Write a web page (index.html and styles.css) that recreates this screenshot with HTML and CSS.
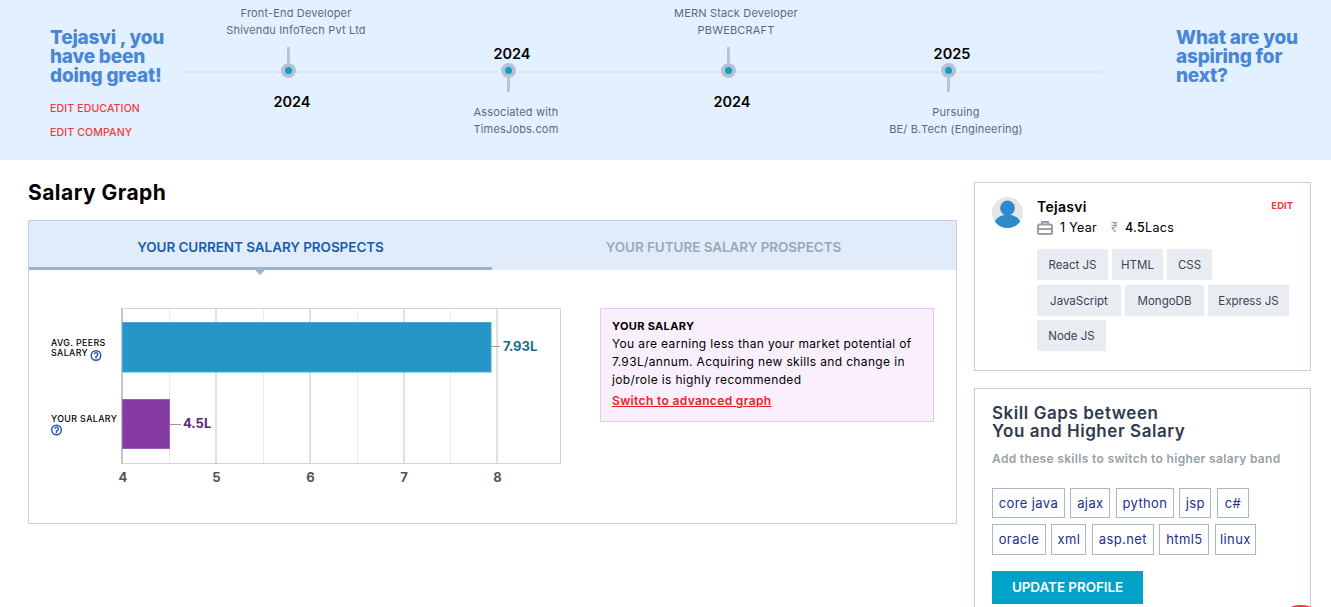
FILE: index.html

```html
<!DOCTYPE html>
<html lang="en">
<head>
    <meta charset="UTF-8">
    <meta name="viewport" content="width=device-width, initial-scale=1.0">
    <title>Salary Graph</title>
    <link rel="stylesheet" href="styles.css">
</head>
<body>
    <!-- Career banner -->
    <section class="banner">
        <div class="banner-left">
            <h2 class="banner-title">Tejasvi , you have been doing great!</h2>
            <a class="edit-link" href="#">EDIT EDUCATION</a>
            <a class="edit-link" href="#">EDIT COMPANY</a>
        </div>

        <div class="timeline">
            <div class="tl-item">
                <div class="tl-top">
                    <p class="tl-text">Front-End Developer<br>Shivendu InfoTech Pvt Ltd</p>
                    <span class="tl-stem"></span>
                </div>
                <span class="tl-dot"></span>
                <div class="tl-bottom">
                    <span class="tl-year tl-year-low">2024</span>
                </div>
            </div>
            <div class="tl-item">
                <div class="tl-top">
                    <span class="tl-year tl-year-high">2024</span>
                </div>
                <span class="tl-dot"></span>
                <div class="tl-bottom">
                    <span class="tl-stem"></span>
                    <p class="tl-text tl-text-low">Associated with<br>TimesJobs.com</p>
                </div>
            </div>
            <div class="tl-item">
                <div class="tl-top">
                    <p class="tl-text">MERN Stack Developer<br>PBWEBCRAFT</p>
                    <span class="tl-stem"></span>
                </div>
                <span class="tl-dot"></span>
                <div class="tl-bottom">
                    <span class="tl-year tl-year-low">2024</span>
                </div>
            </div>
            <div class="tl-item">
                <div class="tl-top">
                    <span class="tl-year tl-year-high">2025</span>
                </div>
                <span class="tl-dot"></span>
                <div class="tl-bottom">
                    <span class="tl-stem"></span>
                    <p class="tl-text tl-text-low">Pursuing<br>BE/ B.Tech (Engineering)</p>
                </div>
            </div>
        </div>

        <div class="banner-right">
            <h2 class="banner-title">What are you aspiring for next?</h2>
        </div>
    </section>

    <main class="content">
        <div class="graph-col">
            <h1 class="graph-title">Salary Graph</h1>

            <div class="graph-panel">
                <div class="tabs">
                    <div class="tab tab-active">YOUR CURRENT SALARY PROSPECTS</div>
                    <div class="tab">YOUR FUTURE SALARY PROSPECTS</div>
                </div>

                <div class="graph-body">
                    <!-- viewBox uses page coordinates, easier to read off the gridlines -->
                    <svg class="chart" width="540" height="190" viewBox="40 300 540 190">
                        <g class="grid-minor">
                            <line x1="169.5" y1="308" x2="169.5" y2="464"></line>
                            <line x1="263.5" y1="308" x2="263.5" y2="464"></line>
                            <line x1="357.5" y1="308" x2="357.5" y2="464"></line>
                            <line x1="450.5" y1="308" x2="450.5" y2="464"></line>
                        </g>
                        <g class="grid-major">
                            <line x1="216" y1="308" x2="216" y2="464"></line>
                            <line x1="310" y1="308" x2="310" y2="464"></line>
                            <line x1="404" y1="308" x2="404" y2="464"></line>
                            <line x1="497" y1="308" x2="497" y2="464"></line>
                        </g>
                        <rect class="plot-frame" x="122.5" y="308.5" width="438" height="155"></rect>
                        <line class="axis-y" x1="122" y1="308" x2="122" y2="464"></line>

                        <rect class="bar-peers" x="122.5" y="322.5" width="368.5" height="49.5"></rect>
                        <rect class="bar-you" x="122.5" y="399.5" width="47" height="49"></rect>
                        <line class="leader" x1="491" y1="346.5" x2="500" y2="346.5"></line>
                        <line class="leader" x1="170" y1="424.5" x2="181" y2="424.5"></line>
                        <text class="val val-peers" x="503" y="351">7.93L</text>
                        <text class="val val-you" x="183" y="428">4.5L</text>

                        <text class="cat" x="51" y="346">AVG. PEERS</text>
                        <text class="cat" x="51" y="356">SALARY</text>
                        <text class="cat" x="51" y="422">YOUR SALARY</text>

                        <g class="help" transform="translate(96 355.5)">
                            <circle r="4.8"></circle>
                            <path d="M-1.8 -1.2 A1.8 1.8 0 1 1 0.6 0.6 L0 1.2 V3"></path>
                        </g>
                        <g class="help" transform="translate(56.5 430)">
                            <circle r="4.8"></circle>
                            <path d="M-1.8 -1.2 A1.8 1.8 0 1 1 0.6 0.6 L0 1.2 V3"></path>
                        </g>

                        <text class="tick" x="123" y="482">4</text>
                        <text class="tick" x="216.5" y="482">5</text>
                        <text class="tick" x="310.5" y="482">6</text>
                        <text class="tick" x="404" y="482">7</text>
                        <text class="tick" x="497.5" y="482">8</text>
                    </svg>

                    <div class="salary-note">
                        <strong class="note-title">YOUR SALARY</strong>
                        <p class="note-text">You are earning less than your market potential of 7.93L/annum. Acquiring new skills and change in job/role is highly recommended</p>
                        <a class="note-link" href="#">Switch to advanced graph</a>
                    </div>
                </div>
            </div>
        </div>

        <aside class="side-col">
            <div class="card profile-card">
                <svg class="avatar" width="31" height="31" viewBox="0 0 31 31">
                    <defs>
                        <clipPath id="avatarClip"><circle cx="15.5" cy="15.5" r="15.5"></circle></clipPath>
                    </defs>
                    <circle cx="15.5" cy="15.5" r="15.5" fill="#e6e6e6"></circle>
                    <g clip-path="url(#avatarClip)" fill="#2f8acb">
                        <circle cx="15.5" cy="11" r="7.4"></circle>
                        <ellipse cx="15.5" cy="27" rx="13" ry="9.5"></ellipse>
                    </g>
                </svg>
                <div class="profile-info">
                    <div class="profile-head">
                        <span class="profile-name">Tejasvi</span>
                        <a class="profile-edit" href="#">EDIT</a>
                    </div>
                    <div class="profile-meta">
                        <svg class="case-icon" width="16" height="14" viewBox="0 0 16 14">
                            <rect x="1" y="3.5" width="14" height="9.5" rx="1.5"></rect>
                            <path d="M5 3.5V1H11V3.5M1 8H15"></path>
                        </svg>
                        <span class="meta-years">1 Year</span>
                        <span class="meta-rupee">₹</span>
                        <span class="meta-salary"><b>4.5</b>Lacs</span>
                    </div>
                    <div class="skills">
                        <span class="skill w-react">React JS</span>
                        <span class="skill w-html">HTML</span>
                        <span class="skill w-css">CSS</span>
                        <span class="skill w-js">JavaScript</span>
                        <span class="skill w-mongo">MongoDB</span>
                        <span class="skill w-express">Express JS</span>
                        <span class="skill w-node">Node JS</span>
                    </div>
                </div>
            </div>

            <div class="card gaps-card">
                <h3 class="gaps-title">Skill Gaps between<br>You and Higher Salary</h3>
                <p class="gaps-sub">Add these skills to switch to higher salary band</p>
                <div class="gap-tags">
                    <span class="gap-tag w-core">core java</span>
                    <span class="gap-tag w-ajax">ajax</span>
                    <span class="gap-tag w-python">python</span>
                    <span class="gap-tag w-jsp">jsp</span>
                    <span class="gap-tag w-c">c#</span>
                </div>
                <div class="gap-tags gap-tags-second">
                    <span class="gap-tag w-oracle">oracle</span>
                    <span class="gap-tag w-xml">xml</span>
                    <span class="gap-tag w-asp">asp.net</span>
                    <span class="gap-tag w-html5">html5</span>
                    <span class="gap-tag w-linux">linux</span>
                </div>
                <button class="update-btn" type="button">UPDATE PROFILE</button>
            </div>
        </aside>
    </main>

    <div class="chat-bubble"></div>
</body>
</html>
```

FILE: styles.css

```css
* {
    box-sizing: border-box;
}

html, body {
    height: 100%;
    overflow: hidden;
}

body {
    margin: 0;
    background-color: #fff;
    font-family: Inter, "Open Sans", sans-serif;
    color: #000;
}

h1, h2, h3, p {
    margin: 0;
}

a {
    text-decoration: none;
}

/* banner */
.banner {
    display: flex;
    height: 160px;
    background-color: #e3f0ff;
}

.banner-left {
    width: 186px;
    padding: 28px 0 0 50px;
}

.banner-right {
    width: 136px;
    margin-left: 76px;
    padding-top: 28px;
}

.banner-title {
    font-size: 19px;
    line-height: 19px;
    font-weight: 800;
    color: #4a86d6;
    letter-spacing: -0.2px;
}

.edit-link {
    display: block;
    margin-top: 12px;
    font-size: 10.5px;
    line-height: 12px;
    font-weight: 500;
    letter-spacing: 0.15px;
    color: #ee3a3a;
}

.banner-title + .edit-link {
    margin-top: 18px;
}

.timeline {
    display: flex;
    width: 914px;
    height: 160px;
    background-image: repeating-linear-gradient(to right, #d6e2f0 0, #d6e2f0 6px, transparent 6px, transparent 9px);
    background-size: 100% 2px;
    background-position: 0 71px;
    background-repeat: no-repeat;
}

.tl-item {
    display: flex;
    flex-direction: column;
    align-items: center;
    width: 220px;
}

.tl-top {
    display: flex;
    flex-direction: column;
    align-items: center;
    width: 100%;
    height: 63px;
}

.tl-bottom {
    display: flex;
    flex-direction: column;
    align-items: center;
    width: 100%;
}

.tl-text {
    height: 43px;
    padding-top: 5px;
    font-size: 11px;
    line-height: 17px;
    letter-spacing: 0.17px;
    color: #5c6b80;
    text-align: center;
    white-space: nowrap;
}

.tl-text-low {
    height: auto;
    padding-top: 12px;
}

.tl-stem {
    display: block;
    flex: none;
    width: 3px;
    height: 16px;
    margin-right: 16px;
    margin-top: 5px;
    background-color: #b7c5d9;
}

.tl-bottom .tl-stem {
    margin-top: -2px;
}

.tl-dot {
    flex: none;
    width: 15px;
    height: 15px;
    margin-right: 16px;
    border-radius: 50%;
    border: 4px solid #b3c2d8;
    background-color: #139fc0;
}

.tl-year {
    font-size: 14.5px;
    line-height: 18px;
    font-weight: 600;
    margin-right: 8px;
}

.tl-year-high {
    margin-top: 45px;
}

.tl-year-low {
    margin-top: 15px;
}

/* main area */
.content {
    display: flex;
    gap: 17px;
    padding: 22px 20px 0 28px;
}

.graph-col {
    width: 929px;
    flex: none;
}

.graph-title {
    height: 20px;
    font-size: 21px;
    line-height: 21px;
    font-weight: 700;
    letter-spacing: 0.45px;
    margin-bottom: 18px;
}

.graph-panel {
    border: 1px solid #c9ced8;
}

.tabs {
    display: flex;
    height: 49px;
    background-color: #e0ecfa;
}

.tab {
    width: 463px;
    padding-top: 17px;
    font-size: 13.5px;
    line-height: 18px;
    font-weight: 600;
    letter-spacing: -0.06px;
    text-align: center;
    color: #9aa8b8;
}

.tab-active {
    position: relative;
    color: #1a5cb0;
    border-bottom: 3px solid #9ab3d0;
}

.tab-active::after {
    content: "";
    position: absolute;
    left: 226px;
    top: 49px;
    border: 5px solid transparent;
    border-top-color: #9ab3d0;
    border-bottom-width: 0;
}

.graph-body {
    display: flex;
    align-items: flex-start;
    gap: 20px;
    padding: 30px 0 33px 11px;
}

.chart {
    display: block;
    flex: none;
}

.grid-minor line {
    stroke: #ececf0;
    stroke-width: 1;
}

.grid-major line {
    stroke: #d6d6db;
    stroke-width: 1.5;
}

.plot-frame {
    fill: none;
    stroke: #d2d2d8;
}

.axis-y {
    stroke: #c6c6c6;
    stroke-width: 2;
}

.bar-peers {
    fill: #2696c6;
    stroke: #45a9d2;
}

.bar-you {
    fill: #863ba3;
    stroke: #9a5ab5;
}

.leader {
    stroke: #9a9a9a;
}

.val {
    font-size: 13px;
    font-weight: 700;
}

.val-peers {
    fill: #1a6b8c;
}

.val-you {
    fill: #5a2a78;
}

.cat {
    font-size: 8.8px;
    font-weight: 500;
    letter-spacing: 0.4px;
    fill: #000;
}

.help circle {
    fill: #fff;
    stroke: #1c50b8;
    stroke-width: 1.4;
}

.help path {
    fill: none;
    stroke: #1c50b8;
    stroke-width: 1.4;
}

.tick {
    font-size: 13px;
    font-weight: 700;
    fill: #555;
    text-anchor: middle;
}

.salary-note {
    width: 334px;
    height: 114px;
    margin-top: 8px;
    padding: 10px 11px 0;
    background-color: #faf0fd;
    border: 1px solid #e4c7f3;
    font-size: 12px;
    line-height: 18px;
    letter-spacing: 0.35px;
}

.note-title {
    display: block;
    font-size: 11px;
    line-height: 14px;
    font-weight: 700;
}

.note-text {
    margin-top: 2px;
}

.note-link {
    display: block;
    margin-top: 3px;
    font-weight: 600;
    color: #ee1c25;
    text-decoration: underline;
}

/* right column */
.side-col {
    width: 337px;
    flex: none;
}

.card {
    background-color: #fff;
    border: 1px solid #c5d0de;
}

.profile-card {
    display: flex;
    height: 189px;
    margin-bottom: 17px;
    padding: 14px 17px 0;
}

.avatar {
    flex: none;
}

.profile-info {
    flex: 1;
    margin-left: 14px;
}

.profile-head {
    display: flex;
    justify-content: space-between;
    align-items: center;
    height: 20px;
}

.profile-name {
    margin-top: -2px;
    font-size: 14px;
    font-weight: 600;
    letter-spacing: 0.3px;
}

.profile-edit {
    margin-top: -4px;
    font-size: 9.5px;
    font-weight: 700;
    color: #ee3a3a;
}

.profile-meta {
    display: flex;
    align-items: center;
    height: 21px;
    font-size: 12.5px;
    letter-spacing: 0.3px;
}

.case-icon {
    flex: none;
    margin-right: 7px;
}

.case-icon rect, .case-icon path {
    fill: none;
    stroke: #9a9ea6;
    stroke-width: 2;
}

.meta-years {
    width: 51px;
}

.meta-rupee {
    width: 14px;
    color: #9a9ea6;
}

.meta-salary b {
    font-weight: 500;
}

.skills {
    display: flex;
    flex-wrap: wrap;
    gap: 4.5px 4px;
    margin-top: 11px;
}

.skill {
    height: 31px;
    font-size: 11.5px;
    line-height: 32px;
    text-align: center;
    color: #3a4556;
    background-color: #e9ecf1;
}

.w-react { width: 71px; }
.w-html { width: 51px; }
.w-css { width: 45px; }
.w-js { width: 84px; }
.w-mongo { width: 79px; }
.w-express { width: 81px; }
.w-node { width: 69px; }

.gaps-card {
    height: 240px;
    padding: 15px 17px 0;
}

.gaps-title {
    font-size: 17px;
    line-height: 18px;
    font-weight: 600;
    letter-spacing: 0.55px;
    color: #2f3b4e;
}

.gaps-sub {
    margin-top: 10px;
    font-size: 12px;
    line-height: 18px;
    font-weight: 600;
    letter-spacing: 0.33px;
    color: #96a2a8;
}

.gap-tags {
    display: flex;
    gap: 5.5px;
    margin-top: 20px;
}

.gap-tags-second {
    margin-top: 6px;
}

.gap-tag {
    height: 30px;
    border: 1px solid #a9b8c9;
    font-size: 13px;
    line-height: 28px;
    letter-spacing: 0.4px;
    text-align: center;
    color: #1c2f8f;
    white-space: nowrap;
}

.gap-tags-second .gap-tag {
    height: 31px;
    line-height: 29px;
}

.w-core { width: 72.9px; }
.w-ajax { width: 40px; }
.w-python { width: 58px; }
.w-jsp { width: 32px; }
.w-c { width: 32px; }
.w-oracle { width: 53.9px; }
.w-xml { width: 35px; }
.w-asp { width: 62px; }
.w-html5 { width: 50px; }
.w-linux { width: 41px; }

.update-btn {
    display: block;
    width: 151px;
    height: 33px;
    margin-top: 16px;
    padding: 0 0 2px;
    border: none;
    background-color: #00a2c7;
    color: #fff;
    font-family: inherit;
    font-size: 13.5px;
    font-weight: 600;
    letter-spacing: -0.08px;
}

.chat-bubble {
    position: fixed;
    left: 1271px;
    top: 605px;
    width: 60px;
    height: 60px;
    border-radius: 50%;
    background-color: #ee3a3a;
}
```
